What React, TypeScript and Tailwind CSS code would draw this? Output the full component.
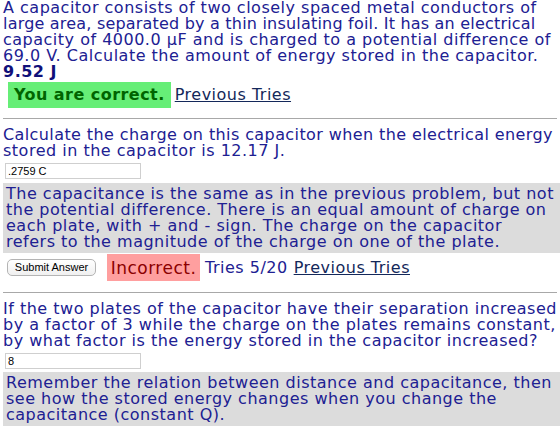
import React from "react";

export default function App() {
  return (
    <div className="w-[560px] h-[427px] overflow-hidden bg-white font-['DejaVu_Sans',sans-serif] text-[16px] leading-[16px] tracking-[0.5px] text-[#202092] whitespace-nowrap">
      <div className="pl-[3px]">
        <p>
          A capacitor consists of two closely spaced metal conductors of<br />
          <span className="tracking-[0.2px]">large area, separated by a thin insulating foil. It has an electrical</span><br />
          capacity of 4000.0 µF and is charged to a potential difference of<br />
          69.0 V. Calculate the amount of energy stored in the capacitor.
        </p>
        <p className="font-bold text-[#10107a]">9.52 J</p>
        <div className="flex items-center mt-[2px] pl-[5px]">
          <span className="bg-[#66ee77] text-[#006400] font-bold px-[6px] h-[26px] flex items-center tracking-[0.45px]">You are correct.</span>
          <a className="ml-[4px] underline text-[#14285a]">Previous Tries</a>
        </div>
        <div className="mt-[10px] mb-[8px] border-t border-[#a8a8a8] mr-[3px]" />
        <p>
          <span className="tracking-[0.4px]">Calculate the charge on this capacitor when the electrical energy</span><br />
          stored in the capacitor is 12.17 J.
        </p>
        <div className="pt-[4px] pl-[2px]">
          <div className="w-[136px] h-[16px] border border-[#cfcfcf] bg-white text-black font-['Liberation_Sans',sans-serif] text-[11px] leading-[14px] tracking-normal pl-[2px]">.2759 C</div>
        </div>
        <div className="mt-[4px] bg-[#dcdcdc] pl-[3px] py-[3px]">
          The capacitance is the same as in the previous problem, but not<br />
          the potential difference. There is an equal amount of charge on<br />
          each plate, with + and - sign. The charge on the capacitor<br />
          refers to the magnitude of the charge on one of the plate.
        </div>
        <div className="flex items-center mt-[1px] h-[27px] pl-[4px]">
          <span className="w-[89px] h-[17px] rounded-[5px] border border-[#b4b4b4] bg-gradient-to-b from-white to-[#f0f0f0] text-black font-['Liberation_Sans',sans-serif] text-[11px] leading-[15px] tracking-normal flex items-center justify-center">Submit Answer</span>
          <span className="ml-[11px] bg-[#ff9f9f] text-[#8b0000] text-[17px] h-[27px] w-[93px] flex items-center justify-center">Incorrect.</span>
          <span className="ml-[5px] text-[16px]">Tries 5/20</span>
          <a className="ml-[6px] underline text-[#14285a] text-[16px]">Previous Tries</a>
        </div>
        <div className="mt-[11px] mb-[8px] border-t border-[#a8a8a8] mr-[3px]" />
        <p>
          If the two plates of the capacitor have their separation increased<br />
          by a factor of 3 while the charge on the plates remains constant,<br />
          by what factor is the energy stored in the capacitor increased?
        </p>
        <div className="pt-[4px] pl-[2px]">
          <div className="w-[136px] h-[16px] border border-[#cfcfcf] bg-white text-black font-['Liberation_Sans',sans-serif] text-[11px] leading-[14px] tracking-normal pl-[2px]">8</div>
        </div>
        <div className="mt-[3px] bg-[#dcdcdc] pl-[3px] py-[3px]">
          Remember the relation between distance and capacitance, then<br />
          see how the stored energy changes when you change the<br />
          capacitance (constant Q).
        </div>
      </div>
    </div>
  );
}
